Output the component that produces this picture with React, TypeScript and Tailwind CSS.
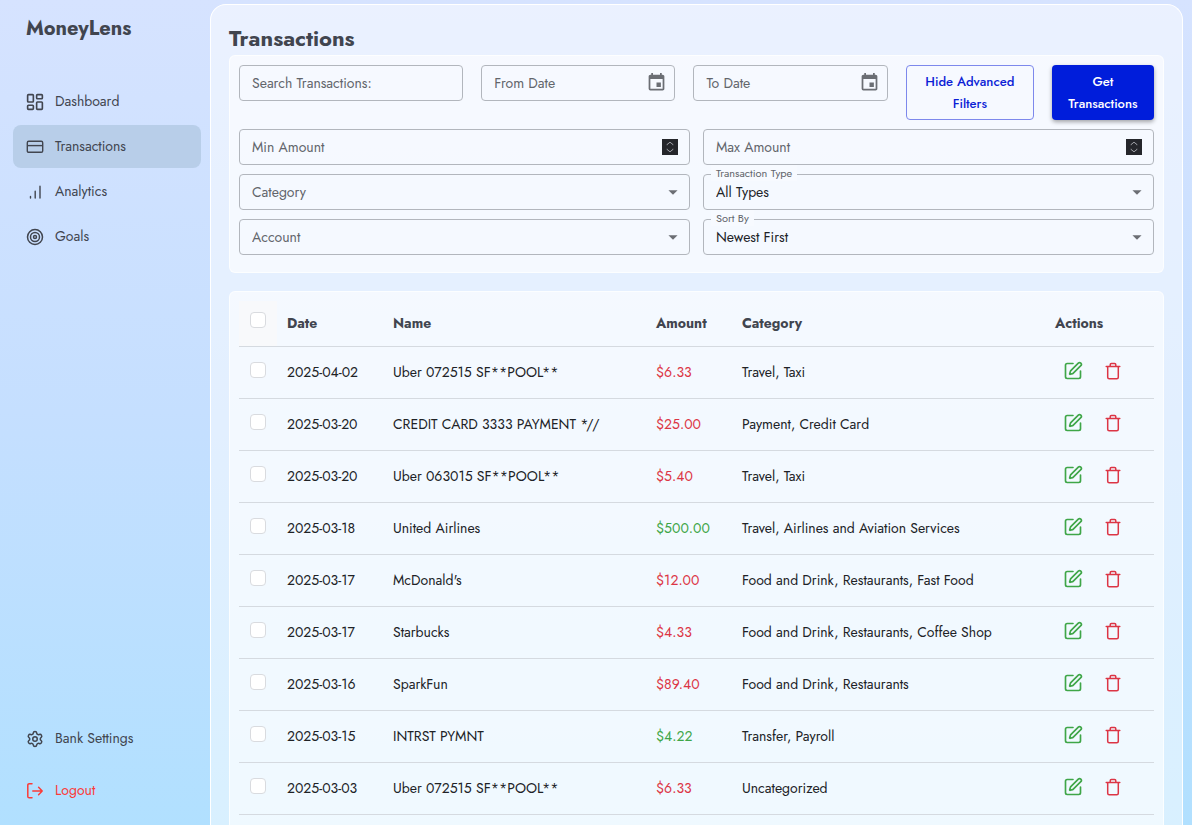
import React, { useState } from 'react';
import { LayoutDashboard, Settings, SquarePen, Target } from 'lucide-react';
import { MdEvent, MdArrowDropDown } from 'react-icons/md';

function NavItem({ icon, label, active = false }: { icon: React.ReactNode; label: string; active?: boolean }) {
  return (
    <a
      href="#"
      className={`flex h-[43px] items-center gap-[11px] rounded-lg px-[13px] text-[14px] ${active ? 'bg-[#b8cee9]' : ''}`}
    >
      {icon}
      {label}
    </a>
  );
}

function CardIcon() {
  return (
    <svg viewBox="0 0 18 18" className="size-[18px]" fill="none" stroke="currentColor" strokeWidth="1.4">
      <rect x="1.3" y="3.3" width="15.4" height="11" rx="1.4" />
      <path d="M1.3 7.6h15.4" />
    </svg>
  );
}

function BarsIcon() {
  return (
    <svg viewBox="0 0 18 18" className="size-[18px]" fill="none" stroke="currentColor" strokeWidth="1.4" strokeLinecap="round">
      <path d="M4.5 13.4v1.6M9.2 8.2V15M14 3.2V15" />
    </svg>
  );
}

function LogoutIcon() {
  return (
    <svg viewBox="0 0 18 18" className="size-[18px]" fill="none" stroke="currentColor" strokeWidth="1.5" strokeLinecap="round" strokeLinejoin="round">
      <path d="M6 1.8H3.2q-1.4 0-1.4 1.4v11.2q0 1.4 1.4 1.4H6M6.8 9h9.4M12.6 5.3 16.2 9l-3.6 3.7" />
    </svg>
  );
}

function TrashIcon() {
  return (
    <svg viewBox="0 0 16 18" className="h-[18px] w-4" fill="none" stroke="currentColor" strokeWidth="1.5" strokeLinejoin="round" strokeLinecap="round">
      <path d="M1.2 4.5h13.6M2.7 4.5v10.7q0 1.5 1.5 1.5h7.6q1.5 0 1.5-1.5V4.5M5.2 4.3V2.7q0-1.2 1.2-1.2h3.2q1.2 0 1.2 1.2v1.6" />
    </svg>
  );
}

const fieldBox = 'h-9 w-full rounded border border-[#b2b6bd] bg-transparent px-3 text-[14px] placeholder:text-[#62656b]';

function DateField({ label }: { label: string }) {
  return (
    <label className="relative block min-w-0">
      <input type="text" placeholder={label} aria-label={label} className={fieldBox} />
      <MdEvent className="pointer-events-none absolute top-[7px] right-2 size-[21px] text-[#6b6e74]" />
    </label>
  );
}

function AmountField({ label }: { label: string }) {
  return (
    <label className="relative block">
      <input type="text" inputMode="decimal" placeholder={label} aria-label={label} className={fieldBox} />
      <span className="pointer-events-none absolute top-[10px] right-3 flex size-4 items-center justify-center bg-[#25262b]">
        <svg viewBox="0 0 16 16" className="size-4" fill="none" stroke="#a0a2a8" strokeWidth="1">
          <path d="M5 6.2V5.6L8 3.2l3 2.4v.6M5 9.8v.6l3 2.4 3-2.4v-.6" />
        </svg>
      </span>
    </label>
  );
}

function SelectField({ id, label, value }: { id: string; label: string; value?: string }) {
  return (
    <div className="relative">
      {value && (
        <label htmlFor={id} className="absolute -top-[9px] left-2 bg-[#f7faff] px-[5px] text-[11px] leading-4 text-[#62656b]">
          {label}
        </label>
      )}
      <select
        id={id}
        aria-label={label}
        className={`${fieldBox} appearance-none ${value ? 'text-[#202226]' : 'text-[#62656b]'}`}
      >
        <option>{value ?? label}</option>
      </select>
      <MdArrowDropDown className="pointer-events-none absolute top-[7px] right-[6px] size-[22px] text-[#6b6e74]" />
    </div>
  );
}

const rows: [string, string, string, string, boolean][] = [
  ['2025-04-02', 'Uber 072515 SF**POOL**', '$6.33', 'Travel, Taxi', false],
  ['2025-03-20', 'CREDIT CARD 3333 PAYMENT *//', '$25.00', 'Payment, Credit Card', false],
  ['2025-03-20', 'Uber 063015 SF**POOL**', '$5.40', 'Travel, Taxi', false],
  ['2025-03-18', 'United Airlines', '$500.00', 'Travel, Airlines and Aviation Services', true],
  ['2025-03-17', "McDonald's", '$12.00', 'Food and Drink, Restaurants, Fast Food', false],
  ['2025-03-17', 'Starbucks', '$4.33', 'Food and Drink, Restaurants, Coffee Shop', false],
  ['2025-03-16', 'SparkFun', '$89.40', 'Food and Drink, Restaurants', false],
  ['2025-03-15', 'INTRST PYMNT', '$4.22', 'Transfer, Payroll', true],
  ['2025-03-03', 'Uber 072515 SF**POOL**', '$6.33', 'Uncategorized', false],
];

const box = 'block size-4 appearance-none rounded-[4px] border border-[#d9dbdf] bg-white checked:bg-[#001ddb]';

export default function App() {
  const [picked, setPicked] = useState<number[]>([]);
  const toggle = (i: number) => setPicked((p) => (p.includes(i) ? p.filter((n) => n !== i) : [...p, i]));
  const allPicked = picked.length === rows.length;

  return (
    <div className="flex h-screen overflow-hidden bg-linear-to-b from-[#d6e3ff] via-[#c5dfff] to-[#b1e0ff] font-['Jost','Lato',sans-serif] text-[#41454f]">
      <aside className="flex w-[210px] shrink-0 flex-col pr-[9px] pl-[13px]">
        <div className="mt-[15px] px-[13px] text-[20px] leading-7 font-bold">MoneyLens</div>
        <nav className="mt-[37px] flex flex-1 flex-col gap-[2px]">
          <NavItem icon={<LayoutDashboard viewBox="1 1 22 22" className="size-[18px]" />} label="Dashboard" />
          <NavItem icon={<CardIcon />} label="Transactions" active />
          <NavItem icon={<BarsIcon />} label="Analytics" />
          <NavItem icon={<Target className="size-[18px]" />} label="Goals" />
        </nav>
        <div className="mb-[13px] flex flex-col gap-[9px]">
          <NavItem icon={<Settings className="size-[18px]" />} label="Bank Settings" />
          <div className="text-[#fb3b38]">
            <NavItem icon={<LogoutIcon />} label="Logout" />
          </div>
        </div>
      </aside>

      <main className="mt-1 mr-[9px] flex min-w-0 flex-1 flex-col overflow-hidden rounded-t-2xl border border-b-0 border-white bg-white/50 px-[18px] pt-[18px]">
        <h1 className="mb-[2px] text-[22px] leading-[30px] font-bold">Transactions</h1>

        <section className="rounded-md border border-white/70 bg-white/60 px-[9px] pt-[9px] pb-[17px]">
          <div className="grid grid-cols-[224fr_194fr_194fr_128fr_102fr] items-start gap-[18px]">
            <input type="text" placeholder="Search Transactions:" aria-label="Search Transactions" className={fieldBox} />
            <DateField label="From Date" />
            <DateField label="To Date" />
            <button className="h-[55px] rounded border border-[#7d88ec] px-4 text-[13px] leading-[22px] font-medium text-[#0c1ed6]">
              Hide Advanced Filters
            </button>
            <button className="h-[55px] rounded bg-[#001ddb] px-3 text-[13px] leading-[22px] font-medium text-white shadow-[0_2px_4px_rgba(0,0,0,0.35)]">
              Get Transactions
            </button>
          </div>
          <div className="mt-[9px] grid grid-cols-2 gap-x-[13px] gap-y-[9px]">
            <AmountField label="Min Amount" />
            <AmountField label="Max Amount" />
            <SelectField id="category" label="Category" />
            <SelectField id="type" label="Transaction Type" value="All Types" />
            <SelectField id="account" label="Account" />
            <SelectField id="sort" label="Sort By" value="Newest First" />
          </div>
        </section>

        <section className="mt-[18px] flex-1 rounded-t-md border border-b-0 border-white/70 bg-white/60 px-[9px] pt-[9px]">
          <table className="w-full table-fixed border-collapse text-left text-[14px]">
            <colgroup>
              <col className="w-[38px]" />
              <col className="w-[106px]" />
              <col className="w-[263px]" />
              <col className="w-[86px]" />
              <col />
              <col className="w-[109px]" />
            </colgroup>
            <thead>
              <tr className="h-[45px] border-b border-[#d5dae0]">
                <th className="bg-[#f8f9fb] pb-[7px] pl-[11px]">
                  <input
                    type="checkbox"
                    aria-label="Select all"
                    checked={allPicked}
                    onChange={() => setPicked(allPicked ? [] : rows.map((_, i) => i))}
                    className={box}
                  />
                </th>
                <th className="px-[10px]">Date</th>
                <th className="px-[10px]">Name</th>
                <th className="px-[10px]">Amount</th>
                <th className="px-[10px]">Category</th>
                <th className="px-[10px]">Actions</th>
              </tr>
            </thead>
            <tbody className="text-[#202226]">
              {rows.map(([date, name, amount, category, income], i) => (
                <tr key={i} className="h-[52px] border-b border-[#d5dae0]">
                  <td className="pb-[5px] pl-[11px]">
                    <input
                      type="checkbox"
                      aria-label={`Select ${name}`}
                      checked={picked.includes(i)}
                      onChange={() => toggle(i)}
                      className={box}
                    />
                  </td>
                  <td className="px-[10px]">{date}</td>
                  <td className="px-[10px]">{name}</td>
                  <td className={`px-[10px] ${income ? 'text-[#3fa648]' : 'text-[#dc3545]'}`}>{amount}</td>
                  <td className="px-[10px]">{category}</td>
                  <td className="px-[10px]">
                    <div className="flex items-center gap-[22px] pb-[2px] pl-2">
                      <button aria-label="Edit" className="text-[#3fa648]">
                        <SquarePen className="size-5" />
                      </button>
                      <button aria-label="Delete" className="text-[#dc3545]">
                        <TrashIcon />
                      </button>
                    </div>
                  </td>
                </tr>
              ))}
            </tbody>
          </table>
        </section>
      </main>
    </div>
  );
}
